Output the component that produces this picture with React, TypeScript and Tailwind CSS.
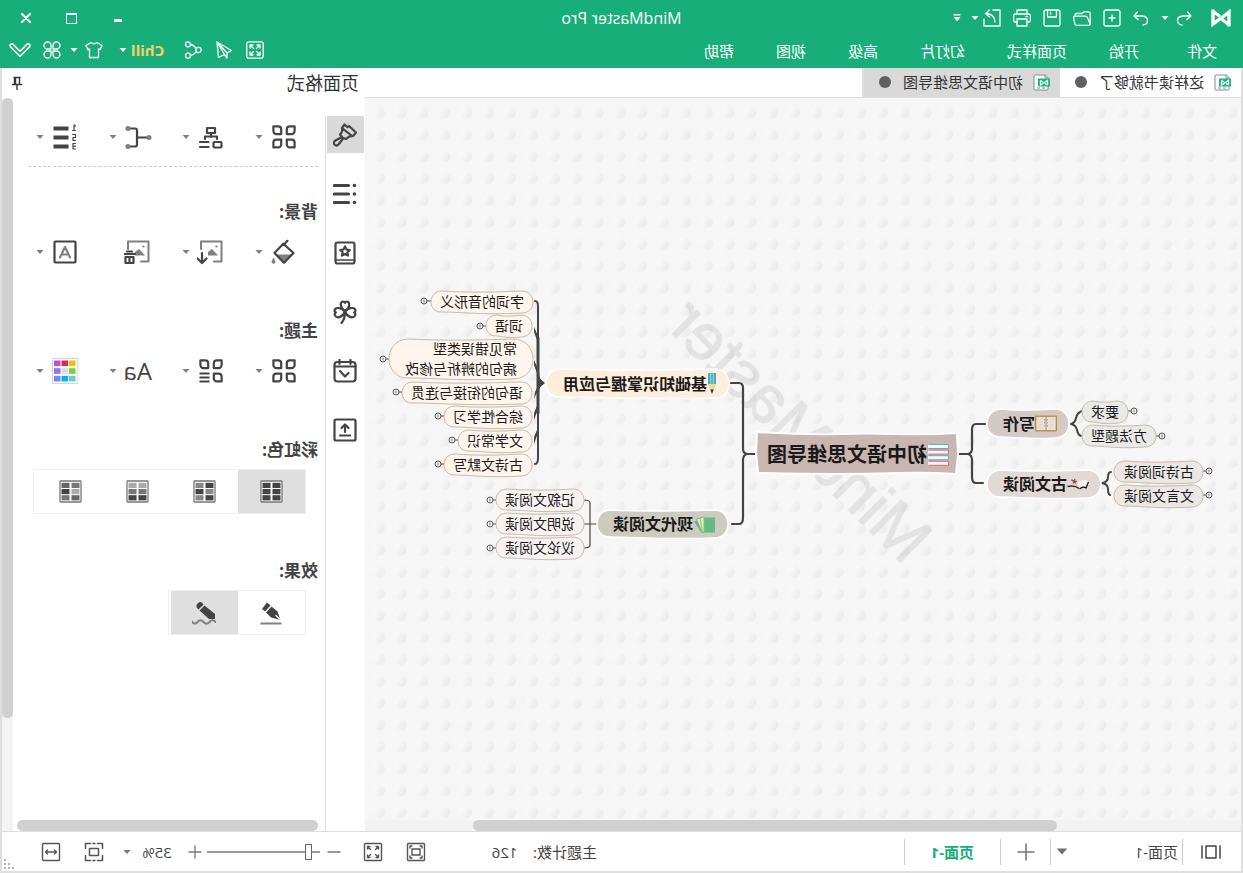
import type { ReactNode } from 'react';

type IconProps = { children: ReactNode; className?: string; box?: string; sw?: number };

function Icon({ children, className = 'w-[18px] h-[18px]', box = '0 0 18 18', sw = 1.3 }: IconProps) {
  return (
    <svg viewBox={box} className={`shrink-0 ${className}`} fill="none" stroke="currentColor" strokeWidth={sw} strokeLinecap="round" strokeLinejoin="round" aria-hidden="true">
      {children}
    </svg>
  );
}

function Caret({ className = 'w-2 h-1' }: { className?: string }) {
  return (
    <svg viewBox="0 0 8 4" className={`shrink-0 ${className}`} fill="currentColor" aria-hidden="true">
      <path d="M0.5 0h7L4 4z" />
    </svg>
  );
}

const leaf = 'M3 0H7.8V4.8A3 3 0 0 1 4.8 7.8H0V3A3 3 0 0 1 3 0Z';

/* ---------- header ---------- */

const fileTools = [
  {
    name: '新建',
    art: (
      <>
        <rect x="1" y="1" width="16" height="16" rx="2" />
        <path d="M9 6v6M6 9h6" />
      </>
    ),
  },
  { name: '打开', art: <path d="M0.8 15V4.500q0-1.700 1.700-1.700h4.500l2 1.700h5.500q1.500 0 1.500 1.500V7M0.800 15q0 1.400 1.400 1.400h12.300q1.200 0 1.500-1l1.400-6.700q0-1.500-1.500-1.500H5.500q-1.500 0-2 1.500L0.800 15" /> },
  {
    name: '保存',
    art: (
      <>
        <path d="M1 3q0-2 2-2h12q2 0 2 2v12q0 2-2 2H3q-2 0-2-2z" />
        <path d="M4.500 1.200V8h9V1.200M10.500 3.500v2" />
      </>
    ),
  },
  {
    name: '打印',
    art: (
      <>
        <path d="M4 5V1h10v4M4 13H2.500Q0.600 13 0.600 11V7q0-2 2-2h12.800q2 0 2 2v4q0 2-1.900 2H14" />
        <path d="M4 10h10v7H4zM3.500 7.500h1.500" />
      </>
    ),
  },
  {
    name: '导出',
    art: (
      <>
        <path d="M8 1H1v16h16V10" />
        <path d="M6 13C6 8 9 5 15 4.500M11.500 1l4 3.500-4 3.500" />
      </>
    ),
  },
];

function Header() {
  return (
    <header className="bg-[#17ae79] text-white">
      <div className="grid h-9 grid-cols-[1fr_auto_1fr] items-center">
        <div className="flex items-center pl-3">
          <svg viewBox="0 0 20 18" className="h-[18px] w-5" fill="none" stroke="#fff" strokeWidth="3.400" strokeLinejoin="miter" aria-hidden="true">
            <path d="M2 17.500V3L9.500 9 18 15V0.500" />
            <path d="M3 15 9 10.500M17 3 11 7.500" strokeWidth="3" />
          </svg>
          <button aria-label="撤销" className="ml-[18px]">
            <Icon><path d="M5.500 3 2 7l4 3.500M2 7h8q5.500 0.500 5.500 4.500T11 16" /></Icon>
          </button>
          <button aria-label="撤销列表" className="ml-1.5"><Caret /></button>
          <button aria-label="重做" className="ml-[11px]">
            <Icon><path d="M12.500 3 16 7l-4 3.500M16 7H8Q2.500 7.500 2.500 11.500T7 16" /></Icon>
          </button>
          <div className="ml-[11px] flex items-center gap-3">
            {fileTools.map((t) => (
              <button key={t.name} aria-label={t.name}>
                <Icon>{t.art}</Icon>
              </button>
            ))}
          </div>
          <button aria-label="导出选项" className="ml-1"><Caret /></button>
          <button aria-label="更多" className="ml-2.5">
            <Icon className="h-2 w-2" box="0 0 8 8" sw={1.4}><path d="M1 0.800h6" /><path d="M0.500 3h7L4 7.500z" fill="currentColor" stroke="none" /></Icon>
          </button>
        </div>
        <h1 className="text-base leading-6">MindMaster Pro</h1>
        <div className="flex items-center justify-end pr-[3px]">
          <button aria-label="最小化" className="grid h-9 w-[46px] place-items-center"><span className="mt-1 h-[3px] w-2 bg-white" /></button>
          <button aria-label="最大化" className="grid h-9 w-[46px] place-items-center"><span className="h-[11px] w-[11px] border border-t-2 border-white" /></button>
          <button aria-label="关闭" className="grid h-9 w-[46px] place-items-center">
            <Icon className="h-[10px] w-[10px]" box="0 0 10 10" sw={2}><path d="M1 1l8 8M9 1 1 9" /></Icon>
          </button>
        </div>
      </div>
      <div className="flex h-8 items-center justify-between pb-0.5">
        <nav className="flex gap-[42px] pl-[26px] text-[15px] leading-5">
          <button className="mr-1.5">文件</button>
          {['开始', '页面样式', '幻灯片', '高级', '视图', '帮助'].map((m) => (
            <button key={m}>{m}</button>
          ))}
        </nav>
        <div className="flex items-center pr-[9px] pb-0.5">
          <div className="flex items-center gap-[13px]">
            <button aria-label="全屏">
              <Icon>
                <rect x="0.800" y="0.800" width="16.400" height="16.400" rx="2" />
                <path d="M4 7V4h3M11 4h3v3M14 11v3h-3M7 14H4v-3M4 4l3.500 3.500M14 4l-3.500 3.500M14 14l-3.500-3.500M4 14l3.500-3.500" />
              </Icon>
            </button>
            <button aria-label="发送">
              <Icon><path d="M16 1 1.500 9.500 6 12V17L8.500 13.500 14.500 16.500zM16 1 6 12M16 1 8.500 13.500" /></Icon>
            </button>
            <button aria-label="分享">
              <Icon>
                <circle cx="3.500" cy="9" r="2.700" />
                <circle cx="14" cy="3.300" r="2.500" />
                <circle cx="14" cy="14.700" r="2.500" />
                <path d="M5.500 7.500 7.500 5.500Q9 4 11.500 3.500M5.500 10.500l2 2Q9 14 11.500 14.500" />
              </Icon>
            </button>
          </div>
          <button className="ml-5 text-[15px] leading-5 font-bold text-[#f7ce68]">Chill</button>
          <button aria-label="Chill 选项" className="ml-1"><Caret /></button>
          <button aria-label="皮肤" className="ml-4">
            <Icon><path d="M6 1.500Q9 4 12 1.500L17 4.500 15.300 8.500 13.500 8V16.500H4.500V8L2.700 8.500 1 4.500z" /></Icon>
          </button>
          <button aria-label="皮肤选项" className="ml-[7px]"><Caret /></button>
          <button aria-label="应用" className="ml-[9px]">
            <Icon>
              <path d="M8 8H4.500A3.500 3.500 0 1 1 8 4.500zM10 8h3.500A3.500 3.500 0 1 0 10 4.500zM8 10H4.500A3.500 3.500 0 1 0 8 13.500zM10 10h3.500A3.500 3.500 0 1 1 10 13.500z" />
            </Icon>
          </button>
          <button aria-label="收起" className="ml-3">
            <Icon className="h-4 w-[22px]" box="0 0 22 16" sw={1.6}><path d="M1.200 4.500Q0.500 2 3.500 1.800L11 9.200 18.500 1.800Q21.500 2 20.800 4.500L11 14.200z" /></Icon>
          </button>
        </div>
      </div>
    </header>
  );
}

/* ---------- document tabs ---------- */

function DocIcon() {
  return (
    <svg viewBox="0 0 17 17" className="h-[17px] w-[17px]" fill="none" aria-hidden="true">
      <path d="M4.500 1H15q1 0 1 1v13q0 1-1 1H3q-1 0-1-1V3.500z" fill="#fff" stroke="#8a8a8a" />
      <path d="M5 1v3H2M5 14h3M10 14h3" stroke="#8a8a8a" />
      <rect x="0" y="4.500" width="12" height="8" fill="#13b882" />
      <path d="M2.500 11V6.500L9.500 11V6.500M2.500 11 5 9.500M9.500 6.500 7 8" stroke="#fff" strokeWidth="1.300" />
    </svg>
  );
}

const docs = [
  { title: '这样读书就够了', active: false },
  { title: '初中语文思维导图', active: true },
];

function DocTabs() {
  return (
    <div className="flex h-[30px] border-b border-[#dedede] bg-white">
      {docs.map((d) => (
        <button key={d.title} className={`flex items-center pr-[15px] pb-px pl-[10px] text-[15px] leading-5 text-[#333] ${d.active ? 'border-r-2 border-[#dedede] bg-[#d9d9d9]' : ''}`}>
          <DocIcon />
          <span className="ml-[10px]">{d.title}</span>
          <span className="ml-3 h-3 w-3 rounded-full bg-[#606060]" />
        </button>
      ))}
    </div>
  );
}

/* ---------- mind map ---------- */

type Topic = { text: string[]; x: number; y: number; w: number; h: number; fill: string; dot: [number, number] };

const subtopics: Topic[] = [
  { text: ['要求'], x: 113, y: 303, w: 46, h: 22, fill: '#e9eae8', dot: [107, 313] },
  { text: ['方法题型'], x: 85, y: 327, w: 74, h: 22, fill: '#e9eae8', dot: [79, 338] },
  { text: ['古诗词阅读'], x: 38, y: 363, w: 89, h: 22, fill: '#ece6e4', dot: [32, 373] },
  { text: ['文言文阅读'], x: 38, y: 387, w: 89, h: 22, fill: '#ece6e4', dot: [32, 397] },
  { text: ['字词的音形义'], x: 708, y: 193, w: 102, h: 22, fill: '#fff5ec', dot: [817, 203] },
  { text: ['词语'], x: 709, y: 217, w: 46, h: 22, fill: '#fff5ec', dot: [761, 228] },
  { text: ['常见错误类型', '病句的辨析与修改'], x: 708, y: 241, w: 144, h: 40, fill: '#fff5ec', dot: [858, 261] },
  { text: ['语句的衔接与连贯'], x: 709, y: 284, w: 130, h: 22, fill: '#fff5ec', dot: [845, 294] },
  { text: ['综合性学习'], x: 709, y: 308, w: 88, h: 22, fill: '#fff5ec', dot: [803, 318] },
  { text: ['文学常识'], x: 709, y: 332, w: 74, h: 22, fill: '#fff5ec', dot: [789, 342] },
  { text: ['古诗文默写'], x: 709, y: 356, w: 88, h: 22, fill: '#fff5ec', dot: [803, 366] },
  { text: ['记叙文阅读'], x: 657, y: 391, w: 88, h: 22, fill: '#f7f2f1', dot: [751, 402] },
  { text: ['说明文阅读'], x: 657, y: 415, w: 88, h: 22, fill: '#f7f2f1', dot: [751, 426] },
  { text: ['议论文阅读'], x: 657, y: 439, w: 88, h: 22, fill: '#f7f2f1', dot: [751, 450] },
];

// slightly uneven pill outline, as if drawn by hand
function pill(x: number, y: number, w: number, h: number) {
  const r = h / 2;
  const out = r / 3;
  return `M${x + r} ${y}C${x + w * 0.35} ${y + 1} ${x + w * 0.6} ${y + 2} ${x + w - r} ${y}C${x + w + out} ${y} ${x + w + out} ${y + h} ${x + w - r} ${y + h - 1}C${x + w * 0.7} ${y + h - 1} ${x + w * 0.5} ${y + h + 2} ${x + r} ${y + h}C${x - out} ${y + h} ${x - out} ${y} ${x + r} ${y}Z`;
}

const bookIcon = (
  <svg viewBox="0 0 22 24" className="h-6 w-[22px] shrink-0" aria-hidden="true">
    {['#4cbcc4', '#ef5d80', '#4cbcc4', '#ef5d80'].map((c, i) => (
      <g key={i}>
        <rect x="1" y={1 + i * 5.6} width="20" height="5" rx="1" fill={c} />
        <rect x="2" y={2 + i * 5.6} width="20" height="3" fill="#f7f7f7" />
      </g>
    ))}
  </svg>
);

const openBookIcon = (
  <svg viewBox="0 0 22 17" className="h-[17px] w-[22px] shrink-0" aria-hidden="true">
    <rect x="0.700" y="1.200" width="20.600" height="14.600" fill="#e6e4dc" stroke="#bd8a28" strokeWidth="1.300" />
    <path d="M11 1v15" stroke="#a88c58" strokeWidth="1" />
    <path d="M9.500 4v9M12.500 4v9" stroke="#dc8c80" strokeWidth="1" strokeDasharray="1.500 1.500" />
    <path d="M3 4h5M3 7h5M3 10h5M3 13h5M14 4h5M14 7h5M14 10h5M14 13h5" stroke="#d0cec6" strokeWidth="0.800" />
  </svg>
);

const scrollIcon = (
  <svg viewBox="0 0 22 12" className="h-3 w-[22px] shrink-0" aria-hidden="true">
    <path d="M0.500 3 3 9Q6 7 10 10L12 4Q6 0 0.500 3z" fill="#f8f5ec" stroke="#d9d2c0" strokeWidth="0.600" />
    <path d="M0.500 4 3 10Q6 8 9.500 11" fill="none" stroke="#111" strokeWidth="1.200" />
    <path d="M10 10.500Q14 7 21.500 8.500" fill="none" stroke="#3a2c28" strokeWidth="1.600" />
    <path d="M12 3.500 18 2M13 5.500l4-3.500M14 1l2 4.500" stroke="#8c5148" strokeWidth="1.200" />
  </svg>
);

const pencilIcon = (
  <svg viewBox="0 0 10 21" className="h-[21px] w-[10px] shrink-0" aria-hidden="true">
    <path d="M1 0h8v11H1z" fill="#3fb0bd" />
    <path d="M3.700 0v11M6.300 0v11" stroke="#a5dce0" strokeWidth="1" />
    <path d="M1 11h8L6.500 18h-3z" fill="#f5d3a0" />
    <path d="M3.300 16.500h3.400L5 21z" fill="#333" />
  </svg>
);

const cardsIcon = (
  <svg viewBox="0 0 23 17" className="h-[17px] w-[23px] shrink-0" aria-hidden="true">
    <path d="M12 2 22 5.500 14.500 17H12z" fill="#61b98a" />
    <path d="M12 1.500 19.500 3 14 16.500H12z" fill="#f1e6b6" stroke="#61b98a" strokeWidth="0.800" />
    <path d="M12 1 16 1.800 13.500 16.500H12z" fill="#f1e6b6" stroke="#61b98a" strokeWidth="0.800" />
    <path d="M1 1.500h10.500V16.500H1z" fill="#61bb85" />
  </svg>
);

const mainTopics = [
  { text: '写作', x: 172, y: 311, w: 82, h: 29, fill: '#d4cac5', icon: openBookIcon },
  { text: '古文阅读', x: 140, y: 372, w: 114, h: 28, fill: '#e2d9d7', icon: scrollIcon },
  { text: '基础知识掌握与应用', x: 512, y: 271, w: 183, h: 29, fill: '#feeedb', icon: pencilIcon },
  { text: '现代文阅读', x: 513, y: 412, w: 131, h: 28, fill: '#cdcabf', icon: cardsIcon },
];

function MindMap() {
  return (
    <div className="relative min-h-0 flex-1 overflow-hidden bg-[#f6f6f6]">
      <svg className="absolute inset-0 h-full w-full" aria-hidden="true">
        <defs>
          <linearGradient id="bump" x1="1" y1="0.200" x2="0" y2="0.800">
            <stop offset="0" stopColor="#fbfbfb" />
            <stop offset="0.400" stopColor="#f4f4f4" />
            <stop offset="1" stopColor="#e9e9e9" />
          </linearGradient>
          <pattern id="bumps" x="-1.300" y="3.600" width="21.860" height="21.860" patternUnits="userSpaceOnUse">
            <circle cx="10.900" cy="10.900" r="6" fill="url(#bump)" />
          </pattern>
        </defs>
        <rect width="100%" height="100%" fill="url(#bumps)" />
        <text x="440" y="355" transform="rotate(-45 440 331)" textAnchor="middle" fontFamily="Liberation Sans, sans-serif" fontSize="65" fill="#000" stroke="#000" strokeWidth="1" opacity="0.070">
          MindMaster
        </text>
        <g fill="none" stroke="#444" strokeWidth="2.200" strokeLinecap="round" strokeLinejoin="round">
          <path d="M486 356h8q4-1 4-5V290q0-5-4-5" stroke="none" />
          <path d="M486 356h8q4-1 4-5V290q0-5 4-5h8M494 356q4 1 4 6v58q0 6 4 6h7" />
          <path d="M282 356h-9q-4-1-4-5v-19q0-6-4-6h-9M273 356q-4 1-4 6v17q0 6-4 6h-7" />
          <path d="M698 285q5-2 5-12V208q0-5 3-5M698 285q5 2 5 10v65q0 6 3 6" strokeWidth="2" />
          <path d="M703 240v75" strokeWidth="3" />
          <path d="M170 326q-4-1-5-6t-6-7M170 326q-5 1-6 6t-4 6M139 385q-6-1-6-6t-3-5M139 385q-6 1-6 6t-2 6" strokeWidth="2" />
          <path d="M644 426h13M651 426V405q0-3 6-3M651 426v21q0 3 6 3" strokeWidth="1.200" />
        </g>
        <g fill="#444">
          <path d="M702 240l5-11v5l-3 8zM702 273l5-11v5l-3 8zM702 290l5 11-1-7-3-6zM702 308l5 14v-7l-3-7zM702 332l5 14v-7l-3-7zM696 285l6-5 2 0v10l-2 0z" />
        </g>
        {subtopics.map((t) => (
          <g key={t.text[0]}>
            <path d={`M${t.dot[0]} ${t.dot[1]}H${t.dot[0] > t.x ? t.x + t.w : t.x}`} stroke="#444" />
            <circle cx={t.dot[0]} cy={t.dot[1]} r="3" fill="#f6f6f6" stroke="#555" />
            <path d={`M${t.dot[0]} ${t.dot[1] - 1.5}v3`} stroke="#555" strokeWidth="0.800" />
            <path d={pill(t.x, t.y, t.w, t.h)} fill={t.fill} stroke="#c6bca6" />
          </g>
        ))}
        {mainTopics.map((t) => (
          <path key={t.text} d={pill(t.x, t.y, t.w, t.h)} fill={t.fill} stroke="#fff" strokeWidth="1.500" />
        ))}
        <path d="M284 335q30 2 60 1t60 0 80-2l1 20-2 21q-50 1-80 1t-60-1-58 1l-2-20z" fill="#c9b6b0" stroke="#fff" strokeWidth="2" />
      </svg>

      <div className="absolute top-[336px] left-[284px] flex h-[42px] w-[200px] items-center pl-[7px] text-xl font-bold text-[#1a1a1a]">
        {bookIcon}
        <span className="ml-px leading-7 whitespace-nowrap">初中语文思维导图</span>
      </div>
      {mainTopics.map((t) => (
        <div key={t.text} className="absolute flex items-center pl-3 text-base font-bold text-[#1a1a1a]" style={{ left: t.x, top: t.y, width: t.w, height: t.h }}>
          {t.icon}
          <span className="leading-6 whitespace-nowrap">{t.text}</span>
        </div>
      ))}
      {subtopics.map((t) => (
        <div
          key={t.text[0]}
          className={`absolute flex flex-col justify-center text-sm text-[#1a1a1a] ${t.text.length > 1 ? 'pl-4' : 'pl-[9px]'}`}
          style={{ left: t.x, top: t.y, width: t.w, height: t.h }}
        >
          {t.text.map((line) => (
            <span key={line} className="leading-5 whitespace-nowrap">{line}</span>
          ))}
        </div>
      ))}
    </div>
  );
}

/* ---------- format panel ---------- */

const railTools = [
  {
    name: '页面格式',
    art: <path d="M12.500 1.500 9.500 4.200 8 3 1 9.500 4 13Q8.500 13 11 16L13.500 15 18.500 21.500Q20.500 23.500 22.500 21.500T21.500 17.500L15 14 17 11.500Q14 8.500 15 5zM15 5 5 13" />,
  },
  {
    name: '大纲',
    art: (
      <>
        <path d="M8.500 3.500H22.500M8.500 12H22.500M8.500 20.500H22.500" strokeWidth="3.200" />
        <path d="M2.500 3.500h.1M2.500 12h.1M2.500 20.500h.1" strokeWidth="3.500" />
      </>
    ),
  },
  {
    name: '图标',
    art: (
      <>
        <rect x="2.500" y="1.500" width="19" height="21" rx="2" />
        <path d="M3 19h18" strokeWidth="1.600" />
        <path d="M12 5.500l1.500 3 3.300.5-2.400 2.300.6 3.300-3-1.600-3 1.600.6-3.300L7.200 9l3.300-.5z" />
      </>
    ),
  },
  {
    name: '剪贴画',
    art: (
      <>
        <path d="M12 11C6.500 7.500 7 2 10 1.500q1.500 0 2 1.300.5-1.300 2-1.300c3 .5 3.500 6-2 9.500" />
        <path d="M12 11.500C8 7 2 7 1.500 10.500q0 1.500 1.300 2-1.800 1-.8 3C4 19 10 17 12 11.500zM12 11.500C16 7 22 7 22.500 10.500q0 1.500-1.300 2 1.800 1 .8 3C20 19 14 17 12 11.500zM12 12q0 7 3.500 11" />
      </>
    ),
  },
  {
    name: '任务',
    art: (
      <>
        <rect x="1.500" y="3" width="21" height="19.500" rx="3" />
        <path d="M1.500 7.500h21M6.500 1v4M17.500 1v4M17 12l-5 5.500L8.500 14" />
      </>
    ),
  },
  {
    name: '导入',
    art: (
      <>
        <rect x="1.500" y="1.500" width="21" height="21" rx="1.500" />
        <path d="M12 14V7M8.500 10 12 6.500 15.500 10M7 17.500h10" />
      </>
    ),
  },
];

const fourLeaves = (
  <>
    <path d={leaf} transform="matrix(-1 0 0 1 9.200 1.300)" />
    <path d={leaf} transform="translate(14.800 1.300)" />
    <path d={leaf} transform="translate(1.400 14.600)" />
    <path d={leaf} transform="matrix(-1 0 0 1 22.600 14.600)" />
  </>
);

const picture = (
  <>
    <path d="M9 21.500H1.500V1.500H22V9" stroke="#808080" strokeWidth="2" />
    <path d="M5 15.500l6-6.500 4 3v3.500z" fill="#808080" stroke="none" />
    <path d="M6.500 6.500h.1" stroke="#808080" />
  </>
);

const rows = [
  [
    { name: '布局', caret: true, art: fourLeaves },
    {
      name: '结构',
      caret: true,
      art: (
        <>
          <rect x="8" y="3" width="8" height="5" />
          <path d="M12 8v4M6 14v-2.500h12V14" />
          <rect x="1.500" y="17" width="8" height="5.500" rx="1" />
          <path d="M14.500 17H23M14.500 22H23" />
        </>
      ),
    },
    {
      name: '连接线',
      caret: true,
      art: (
        <>
          <path d="M2 12.500h11M20 3.500h-5q-2 0-2 2v14q0 2 2 2h5" />
          <path d="M1 12.500h.1M22 3.500h.1M22 21.500h.1" stroke="#808080" strokeWidth="5" />
        </>
      ),
    },
    {
      name: '编号',
      caret: true,
      art: (
        <>
          <path d="M8.500 3.500H23.500M8.500 12.500H23.500M8.500 21.500H23.500" strokeWidth="3.800" strokeLinecap="butt" />
          <path d="M1.500 1 3 0v5.500M1.500 5.500h3M4.500 9.500h-3v3h2.500v3H1.500M1.500 18.500h2.500v5.500H1.500M1.500 21.200h2.500" strokeWidth="1.200" />
        </>
      ),
    },
  ],
  [
    {
      name: '背景颜色',
      caret: true,
      art: (
        <>
          <path d="M4 14.500h15.500l-7.500 8z" fill="#808080" stroke="none" />
          <path d="M12.700 3.700 21.500 13 12 22.700 2.500 13z" />
          <path d="M8.500 0.800 12.500 5" />
          <path d="M22.500 18.500q3 4.500 0 4.800t0-4.800z" fill="#808080" stroke="#808080" strokeWidth="1" />
        </>
      ),
    },
    { name: '背景图片', caret: true, art: <>{picture}<path d="M21 13v9.500M16.500 18.500 21 23l4.500-4.500" /></> },
    { name: '删除背景', caret: false, art: <>{picture}<path d="M15 14h11M18 11.500h5M16.500 17v6h8v-6zM20.500 17.500v5" /></> },
    {
      name: '水印',
      caret: true,
      art: (
        <>
          <rect x="1.500" y="1.500" width="21" height="21" rx="1" />
          <path d="M7 17.500 12 7l5 10.500M9 14.500h6" stroke="#808080" strokeWidth="2.200" />
        </>
      ),
    },
  ],
  [
    { name: '主题', caret: true, art: fourLeaves },
    {
      name: '主题布局',
      caret: true,
      art: (
        <>
          <path d={leaf} transform="matrix(-1 0 0 1 9.200 1.300)" />
          <path d={leaf} transform="translate(14.800 1.300)" />
          <path d={leaf} transform="translate(1.400 14.600)" />
          <path d="M13.500 14.500H23.500M13.500 18.500H23.500M13.500 22.500H23.500" strokeWidth="2" strokeLinecap="butt" />
        </>
      ),
    },
    { name: '主题字体', caret: true, art: null },
    {
      name: '主题颜色',
      caret: true,
      art: (
        <>
          <rect x="-0.500" y="-0.500" width="25" height="25" fill="#fff" stroke="#cdd5e6" strokeWidth="1" />
          {['#edc000', '#df2a50', '#c64dcb', '#78cf40', '#dcdcdc', '#9573ea', '#68cbdc', '#00b7f5', '#7388ff'].map((c, i) => (
            <rect key={c} x={1.5 + (i % 3) * 7.5} y={1.5 + Math.floor(i / 3) * 7.7} width="6.500" height="5.600" fill={c} stroke="none" />
          ))}
        </>
      ),
    },
  ],
];

function ToolRow({ tools, className }: { tools: (typeof rows)[number]; className: string }) {
  return (
    <div className={`flex h-7 pl-5 ${className}`}>
      {tools.map((t) => (
        <button key={t.name} aria-label={t.name} className="flex w-[73px] shrink-0 items-center text-[#444] last:w-11">
          {t.art ? (
            <Icon className="h-7 w-7" box="-2 -2 28 28" sw={2.2}>{t.art}</Icon>
          ) : (
            <span className="w-7 text-2xl leading-7 font-medium">Aa</span>
          )}
          {t.caret && <Caret className="ml-[7px] h-1 w-2 text-[#808080]" />}
        </button>
      ))}
    </div>
  );
}

const swatches = [
  ['#444', '#444', '#444', '#444', '#444', '#444'],
  ['#444', '#888', '#888', '#444', '#444', '#888'],
  ['#aaa', '#aaa', '#777', '#777', '#444', '#444'],
  ['#777', '#666', '#aaa', '#444', '#666', '#777'],
];

const sectionTitle = 'h-6 text-[17px] leading-6 font-bold text-[#444]';

function FormatPanel() {
  return (
    <aside className="flex w-[363px] shrink-0 flex-col bg-white">
      <div className="flex h-[30px] items-center justify-between pr-2 pl-1.5">
        <h2 className="text-lg leading-7 text-[#333]">页面格式</h2>
        <button aria-label="固定面板" className="text-[#333]">
          <Icon className="h-[14px] w-[14px]" box="0 0 14 14" sw={1.4}><path d="M4 1.500h6M4.500 1.500V8M9.500 1.500V8M2.500 8.500h9M7 9v4.500M8.500 2v6" /></Icon>
        </button>
      </div>
      <div className="flex min-h-0 flex-1">
        <div className="mt-[18px] flex w-10 shrink-0 flex-col gap-[22px] border-r border-[#dedede] pl-px">
          {railTools.map((t, i) => (
            <button key={t.name} aria-label={t.name} className={`grid h-[37px] w-[37px] place-items-center text-[#444] ${i === 0 ? 'bg-[#d9d9d9]' : ''}`}>
              <Icon className="h-6 w-6" box="0 0 24 24" sw={2.2}>{t.art}</Icon>
            </button>
          ))}
        </div>
        <div className="flex min-w-0 flex-1 flex-col pr-1 pl-[7px]">
          <div className="flex-1">
            <ToolRow tools={rows[0]} className="mt-[25px]" />
            <hr className="mt-[15px] mr-[11px] border-dashed border-[#ccc]" />
            <h3 className={`mt-[33px] ${sectionTitle}`}>背景:</h3>
            <ToolRow tools={rows[1]} className="mt-[14px]" />
            <h3 className={`mt-[53px] ${sectionTitle}`}>主题:</h3>
            <ToolRow tools={rows[2]} className="mt-[14px]" />
            <h3 className={`mt-[53px] ${sectionTitle}`}>彩虹色:</h3>
            <div className="mt-[7px] ml-3 flex h-[45px] w-[273px] border border-[#efefef]">
              {swatches.map((s, i) => (
                <button key={i} aria-label={`彩虹色 ${i + 1}`} className={`grid w-[67px] place-items-center ${i === 0 ? 'bg-[#dfdfdf]' : ''}`}>
                  <svg viewBox="0 0 23 23" className="h-[23px] w-[23px]" aria-hidden="true">
                    <rect x="1" y="1" width="21" height="21" rx="0.500" fill="#fff" stroke="#777" strokeWidth="1.300" />
                    {s.map((c, j) => (
                      <rect key={j} x={j % 2 ? 12.5 : 2.5} y={2.8 + Math.floor(j / 2) * 6.2} width="8" height="5.200" fill={c} />
                    ))}
                  </svg>
                </button>
              ))}
            </div>
            <h3 className={`mt-[45px] ${sectionTitle}`}>效果:</h3>
            <div className="mt-[7px] ml-3 flex h-[45px] w-[138px] border border-[#efefef] text-[#444]">
              <button aria-label="普通" className="grid w-[67px] place-items-center">
                <Icon className="h-6 w-6" box="0 0 24 24">
                  <path d="M1.500 22.500h21" stroke="#808080" strokeWidth="2" strokeLinecap="butt" />
                  <path d="M16 1.500 21 8 18 10.500 12.500 4.500zM11.500 5.500 17 11.500 12 16.500 2.500 19 5.500 10.500z" fill="currentColor" stroke="none" />
                  <path d="M3 18.500 7 14.500" stroke="#fff" />
                </Icon>
              </button>
              <button aria-label="手绘" className="grid w-[67px] place-items-center bg-[#dfdfdf]">
                <Icon className="h-6 w-6" box="0 0 24 24">
                  <path d="M0.500 21q3-3.500 6 0t6 0 6 0 6-1" stroke="#808080" strokeWidth="2" />
                  <path d="M11.500 4.500 16.500 9.500 7 18H1V13zM12.500 3.500Q15 -0.500 18 2t0.500 5.500L17.500 8.500z" fill="currentColor" stroke="none" />
                </Icon>
              </button>
            </div>
          </div>
          <div className="h-[11px] rounded-full bg-[#d0d0d0]" />
        </div>
        <div className="w-[11px] shrink-0 bg-[#f3f3f3]">
          <div className="h-[620px] rounded-full bg-[#d0d0d0]" />
        </div>
      </div>
    </aside>
  );
}

/* ---------- status bar ---------- */

const divider = <span className="h-[26px] w-px bg-[#ccc]" />;

function StatusBar() {
  return (
    <footer className="flex h-[42px] items-center justify-between border-x-2 border-t border-b-2 border-[#dedede] bg-white text-[15px] leading-5 text-[#444]">
      <div className="flex items-center pl-5">
        <button aria-label="页面视图">
          <Icon className="h-5 w-5" box="0 0 20 20" sw={1.5}><path d="M1 4v12M19 4v12M5 4h10v12H5z" /></Icon>
        </button>
        <span className="ml-[18px] flex">{divider}</span>
        <div className="relative ml-1 flex w-[122px] items-center">
          <select aria-label="选择页面" className="h-8 w-full appearance-none bg-transparent outline-none">
            <option>页面-1</option>
          </select>
          <Caret className="pointer-events-none absolute right-0 h-[7px] w-3 text-[#707070]" />
        </div>
        <span className="ml-[5px] flex">{divider}</span>
        <button aria-label="新建页面" className="ml-[15px] text-[#777]">
          <Icon sw={1.6}><path d="M1 9h16M9 1v16" /></Icon>
        </button>
        <span className="ml-4 flex">{divider}</span>
        <button className="ml-[26px] font-bold text-[#17ae79]">页面-1</button>
        <span className="ml-[26px] flex">{divider}</span>
      </div>
      <div className="flex items-center pr-[39px]">
        <p className="w-[106px] whitespace-pre">主题计数:    126</p>
        <button aria-label="适合页面" className="ml-[65px] text-[#555]">
          <Icon className="h-5 w-5" box="0 0 20 20" sw={1.4}>
            <rect x="1.500" y="1.500" width="17" height="17" rx="1" />
            <path d="M6 7h8v6H6zM4 6V4h2M14 4h2v2M16 14v2h-2M6 16H4v-2" />
          </Icon>
        </button>
        <button aria-label="全屏" className="ml-[23px] text-[#555]">
          <Icon className="h-5 w-5" box="0 0 20 20" sw={1.4}>
            <rect x="1.500" y="1.500" width="17" height="17" rx="1" />
            <path d="M4.500 7V4.500H7M13 4.500h2.500V7M15.500 13v2.500H13M7 15.500H4.500V13M4.500 4.500l3 3M15.500 4.500l-3 3M15.500 15.500l-3-3M4.500 15.500l3-3" />
          </Icon>
        </button>
        <button aria-label="缩小" className="ml-[22px] text-[#777]">
          <Icon className="h-[14px] w-[14px]" box="0 0 14 14"><path d="M1 7h12" /></Icon>
        </button>
        <input
          type="range"
          aria-label="缩放"
          min={0}
          max={100}
          defaultValue={8}
          className="ml-[7px] h-5 w-[113px] appearance-none bg-transparent [&::-webkit-slider-runnable-track]:h-0.5 [&::-webkit-slider-runnable-track]:bg-[#999] [&::-webkit-slider-thumb]:-mt-[7px] [&::-webkit-slider-thumb]:h-4 [&::-webkit-slider-thumb]:w-[7px] [&::-webkit-slider-thumb]:appearance-none [&::-webkit-slider-thumb]:border [&::-webkit-slider-thumb]:border-[#666] [&::-webkit-slider-thumb]:bg-white"
        />
        <button aria-label="放大" className="ml-[5px] text-[#777]">
          <Icon className="h-[14px] w-[14px]" box="0 0 14 14"><path d="M1 7h12M7 1v12" /></Icon>
        </button>
        <button className="ml-4 flex items-center">
          <span className="w-[30px]">35%</span>
          <Caret className="ml-[11px] h-1 w-2 text-[#777]" />
        </button>
        <button aria-label="适应窗口" className="ml-[19px] text-[#555]">
          <Icon className="h-5 w-5" box="0 0 20 20" sw={1.5}>
            <path d="M1.500 6.500v-5h5M13.500 1.500h5v5M18.500 13.500v5h-5M6.500 18.500h-5v-5M9 1.500h2M9 18.500h2M5.500 6.500h9v7h-9z" />
          </Icon>
        </button>
        <button aria-label="适应宽度" className="ml-[23px] text-[#555]">
          <Icon className="h-5 w-5" box="0 0 20 20" sw={1.4}>
            <rect x="1.500" y="1.500" width="17" height="17" rx="1" />
            <path d="M4.500 10h11M6.500 8l-2 2 2 2M13.500 8l2 2-2 2" />
          </Icon>
        </button>
      </div>
      <svg viewBox="0 0 10 10" className="absolute right-1 bottom-1 h-[10px] w-[10px]" fill="#b5b5b5" aria-hidden="true">
        <path d="M8 0h2v2H8zM4 4h2v2H4zM8 4h2v2H8zM0 8h2v2H0zM4 8h2v2H4zM8 8h2v2H8z" />
      </svg>
    </footer>
  );
}

export default function App() {
  return (
    <div className="relative flex h-screen -scale-x-100 flex-col overflow-hidden bg-white font-['Open_Sans','Noto_Sans_CJK_SC',sans-serif]">
      <Header />
      <main className="flex min-h-0 flex-1 border-x-2 border-[#dedede]">
        <section className="flex min-w-0 flex-1 flex-col">
          <DocTabs />
          <MindMap />
          <div className="h-[11px] bg-[#f2f2f2]">
            <div className="ml-[21%] h-full w-2/3 rounded-full bg-[#d0d0d0]" />
          </div>
        </section>
        <FormatPanel />
      </main>
      <StatusBar />
    </div>
  );
}
